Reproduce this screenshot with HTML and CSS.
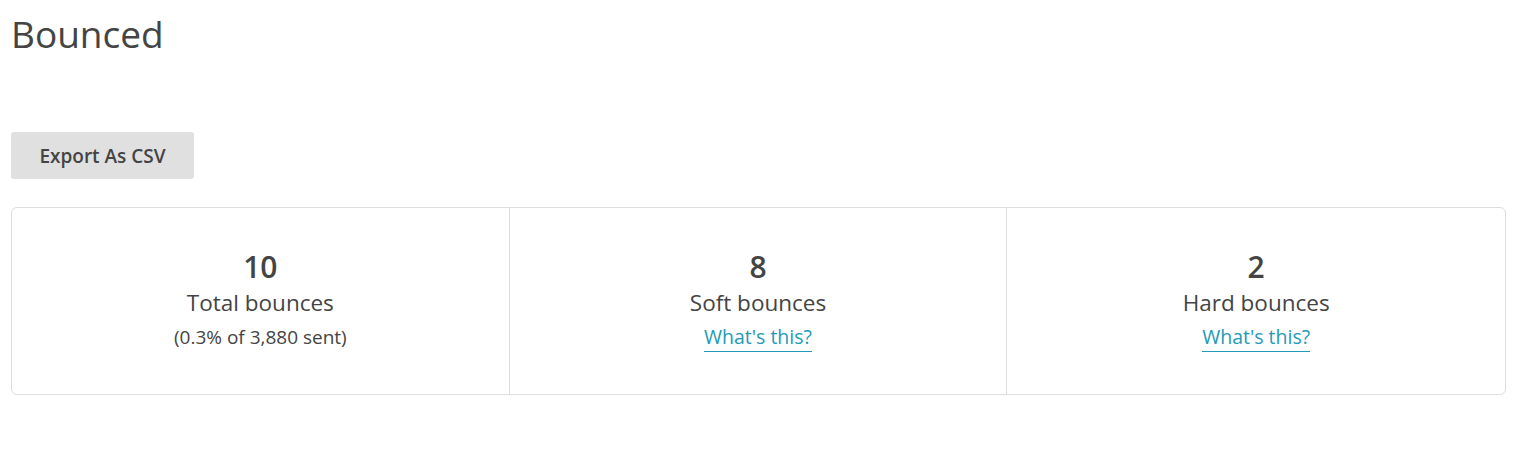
FILE: index.html
```html
<!DOCTYPE html>
<html lang="en">

<head>
  <meta charset="UTF-8" />
  <meta name="viewport" content="width=device-width, initial-scale=1.0" />
  <title>Bounced</title>
  <link rel="stylesheet" href="styles.css">
</head>

<body>

  <main>

    <h1>Bounced</h1>

    <div class="actions">
      <button type="button" class="btn-export">Export As CSV</button>
    </div>

    <div class="stats">
      <div class="stat">
        <div class="stat-num">10</div>
        <div class="stat-label">Total bounces</div>
        <div class="stat-note">(0.3% of 3,880 sent)</div>
      </div>
      <div class="stat">
        <div class="stat-num">8</div>
        <div class="stat-label">Soft bounces</div>
        <div class="stat-note"><a href="#">What's this?</a></div>
      </div>
      <div class="stat">
        <div class="stat-num">2</div>
        <div class="stat-label">Hard bounces</div>
        <div class="stat-note"><a href="#">What's this?</a></div>
      </div>
    </div>

  </main>

</body>

</html>
```

FILE: styles.css
```css
* {
    box-sizing: border-box;
}
html {
    margin: 0;
    padding: 0;
}
body {
    margin: 0;
    padding: 0;
    background: #fff;
    color: #444;
    font-family: "Open Sans", "Liberation Sans", sans-serif;
}
main {
    padding: 0 11px;
}
main h1 {
    margin: 0;
    padding: 10px 0 0;
    font-size: 37px;
    font-weight: 500;
    line-height: 48px;
    color: #444;
}
.actions {
    margin: 74px 0 0;
}
.btn-export {
    margin: 0;
    padding: 0;
    height: 47px;
    width: 183px;
    border: 0;
    border-radius: 3px;
    background: #e0e0e0;
    color: #444;
    font-family: inherit;
    font-size: 19px;
    font-weight: 600;
    cursor: pointer;
}
.stats {
    margin: 28px 0 0;
    height: 188px;
    display: grid;
    grid-template-columns: 1fr 1fr 1fr;
    border: 1px solid #ddd;
    border-radius: 6px;
}
.stat {
    padding: 39px 0 0;
    text-align: center;
    border-right: 1px solid #ddd;
}
.stat:last-child {
    border-right: 0;
}
.stat-num {
    font-size: 30px;
    font-weight: 600;
    line-height: 40px;
}
.stat-label {
    font-size: 22.5px;
    line-height: 32px;
}
.stat-note {
    margin: 5px 0 0;
    font-size: 19px;
    line-height: 26px;
}
.stat-note a {
    color: #239ab7;
    font-size: 19.5px;
    text-decoration: none;
    border-bottom: 1px solid #239ab7;
    padding-bottom: 1px;
}
```
